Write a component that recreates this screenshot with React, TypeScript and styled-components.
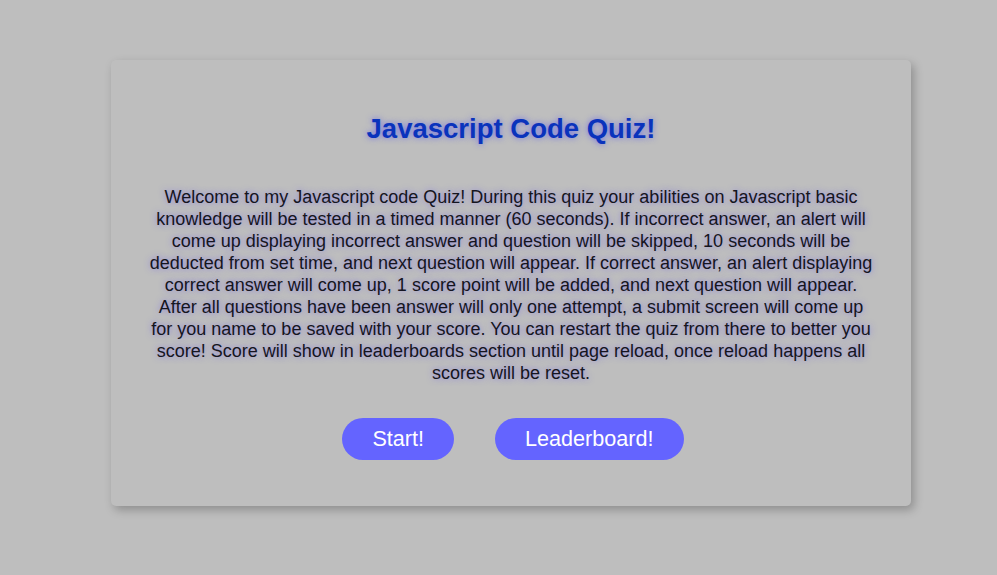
import React from "react";
import styled, { createGlobalStyle } from "styled-components";

const Global = createGlobalStyle`
  html, body { margin: 0; padding: 0; background: #bebebe; }
  body { font-family: "Liberation Sans", Arial, sans-serif; }
`;

const Page = styled.div`
  min-height: 575px;
  padding-top: 60px;
  box-sizing: border-box;
  display: flex;
  justify-content: center;
  align-items: flex-start;
`;

const Card = styled.main`
  width: 800px;
  box-sizing: border-box;
  margin-left: 25px;
  padding: 53px 37px 46px;
  background: #bebebe;
  border-radius: 5px;
  box-shadow: 3px 4px 10px rgba(0, 0, 0, 0.25);
  text-align: center;
`;

const Title = styled.h1`
  margin: 0;
  font-size: 27.5px;
  line-height: 31px;
  font-weight: bold;
  color: #0a33bc;
  text-shadow: 0 0 6px rgba(60, 60, 255, 0.6);
`;

const Intro = styled.p`
  margin: 42px 0 0;
  font-size: 18px;
  line-height: 22px;
  color: #151520;
  text-shadow: 0 0 6px rgba(90, 70, 255, 0.55);
`;

const Actions = styled.div`
  display: flex;
  justify-content: center;
  gap: 41px;
  margin-top: 34px;
  padding-left: 4px;
`;

const Button = styled.button<{ $pad?: number }>`
  height: 42px;
  padding: 0 ${(p) => p.$pad ?? 30}px;
  border: none;
  border-radius: 21px;
  background: #6464ff;
  color: #ffffff;
  font-family: "Liberation Sans", Arial, sans-serif;
  font-size: 21.6px;
  cursor: pointer;
`;

export default function App() {
  return (
    <>
      <Global />
      <Page>
        <Card>
          <Title>Javascript Code Quiz!</Title>
          <Intro>
            Welcome to my Javascript code Quiz! During this quiz your abilities on Javascript basic
            knowledge will be tested in a timed manner (60 seconds). If incorrect answer, an alert will
            come up displaying incorrect answer and question will be skipped, 10 seconds will be
            deducted from set time, and next question will appear. If correct answer, an alert displaying
            correct answer will come up, 1 score point will be added, and next question will appear.
            After all questions have been answer will only one attempt, a submit screen will come up
            for you name to be saved with your score. You can restart the quiz from there to better you
            score! Score will show in leaderboards section until page reload, once reload happens all
            scores will be reset.
          </Intro>
          <Actions>
            <Button $pad={30}>Start!</Button>
            <Button $pad={30}>Leaderboard!</Button>
          </Actions>
        </Card>
      </Page>
    </>
  );
}
